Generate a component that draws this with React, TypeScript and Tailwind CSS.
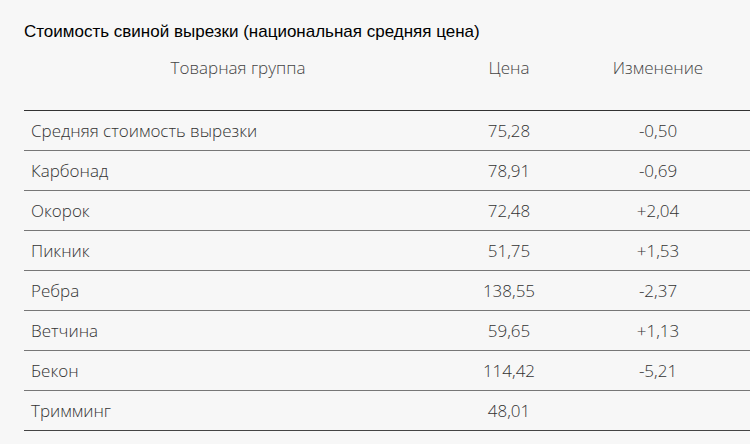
import React from "react";

const rows = [
  { name: "Средняя стоимость вырезки", price: "75,28", change: "-0,50" },
  { name: "Карбонад", price: "78,91", change: "-0,69" },
  { name: "Окорок", price: "72,48", change: "+2,04" },
  { name: "Пикник", price: "51,75", change: "+1,53" },
  { name: "Ребра", price: "138,55", change: "-2,37" },
  { name: "Ветчина", price: "59,65", change: "+1,13" },
  { name: "Бекон", price: "114,42", change: "-5,21" },
  { name: "Тримминг", price: "48,01", change: "" },
];

const App = () => {
  return (
    <div className="min-h-[444px] w-[750px] overflow-hidden bg-[#f7f7f7] pt-5">
      <h2 className="ml-6 text-[17px] leading-6 text-black font-['Liberation_Sans',Arial,sans-serif]">
        Стоимость свиной вырезки (национальная средняя цена)
      </h2>

      <div className="ml-6 mt-1 w-[726px] font-['Open_Sans',sans-serif] text-[17px] font-light leading-6 text-[#333]">
        {/* header */}
        <div className="grid grid-cols-[428px_114px_184px] border-b border-[#333] pt-2 pb-[30px] text-[#444]">
          <div className="text-center">Товарная группа</div>
          <div className="text-center">Цена</div>
          <div className="text-center">Изменение</div>
        </div>

        {rows.map((r, i) => (
          <div
            key={r.name}
            className={
              "grid h-10 grid-cols-[428px_114px_184px] items-center border-b " +
              (i === rows.length - 1 ? "border-[#444]" : "border-[#777]")
            }
          >
            <div className="pl-[7px]">{r.name}</div>
            <div className="text-center">{r.price}</div>
            <div className="text-center">{r.change}</div>
          </div>
        ))}
      </div>
    </div>
  );
};

export default App;
